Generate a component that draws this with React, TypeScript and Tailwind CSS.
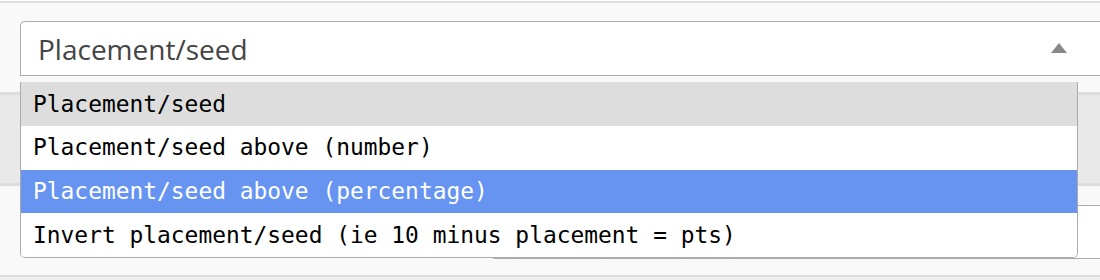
import * as React from "react";

const options = [
  "Placement/seed",
  "Placement/seed above (number)",
  "Placement/seed above (percentage)",
  "Invert placement/seed (ie 10 minus placement = pts)",
];

export default function App() {
  const selected = 0;
  const hovered = 2;

  return (
    <div className="w-[1100px] h-[280px] overflow-hidden bg-white pt-px font-['Open_Sans',sans-serif]">
      <div className="border-t-2 border-[#dddddd] bg-[#f9f9f9]">
        {/* select */}
        <div className="relative pl-5 pt-[18px] pb-4">
          <div className="flex h-[55px] items-center rounded-tl-[5px] border border-r-0 border-[#aaaaaa] bg-white pl-[17px] pr-[33px]">
            <span className="flex-1 text-[28px] leading-none text-[#444444]">Placement/seed</span>
            <svg width="16" height="10" viewBox="0 0 16 10" className="mb-[2px]">
              <polygon points="8,0 16,10 0,10" fill="#888888" />
            </svg>
          </div>

          <ul className="absolute left-5 top-[79px] z-10 w-[1058px] overflow-hidden rounded-b-[5px] border border-t-0 border-[#aaaaaa] bg-white font-['DejaVu_Sans_Mono',monospace] text-[22.9px] text-black">
            {options.map((opt, i) => (
              <li
                key={opt}
                className={
                  "flex h-[43.75px] items-center pl-3 whitespace-pre " +
                  (i === hovered ? "bg-[#6694f0] text-white" : i === selected ? "bg-[#dddddd]" : "bg-white")
                }
              >
                {opt}
              </li>
            ))}
          </ul>
        </div>

        {/* header band */}
        <div className="h-[94px] border-y-[3px] border-[#dddddd] bg-[#e9e9e9]" />

        {/* field row */}
        <div className="pl-[490px] pt-[19px] pb-4">
          <div className="h-[54px] rounded-l-[5px] border border-r-0 border-[#aaaaaa] bg-white" />
        </div>
      </div>
      <div className="h-[10px] border-t-2 border-[#dddddd] bg-[#efefef]" />
    </div>
  );
}
